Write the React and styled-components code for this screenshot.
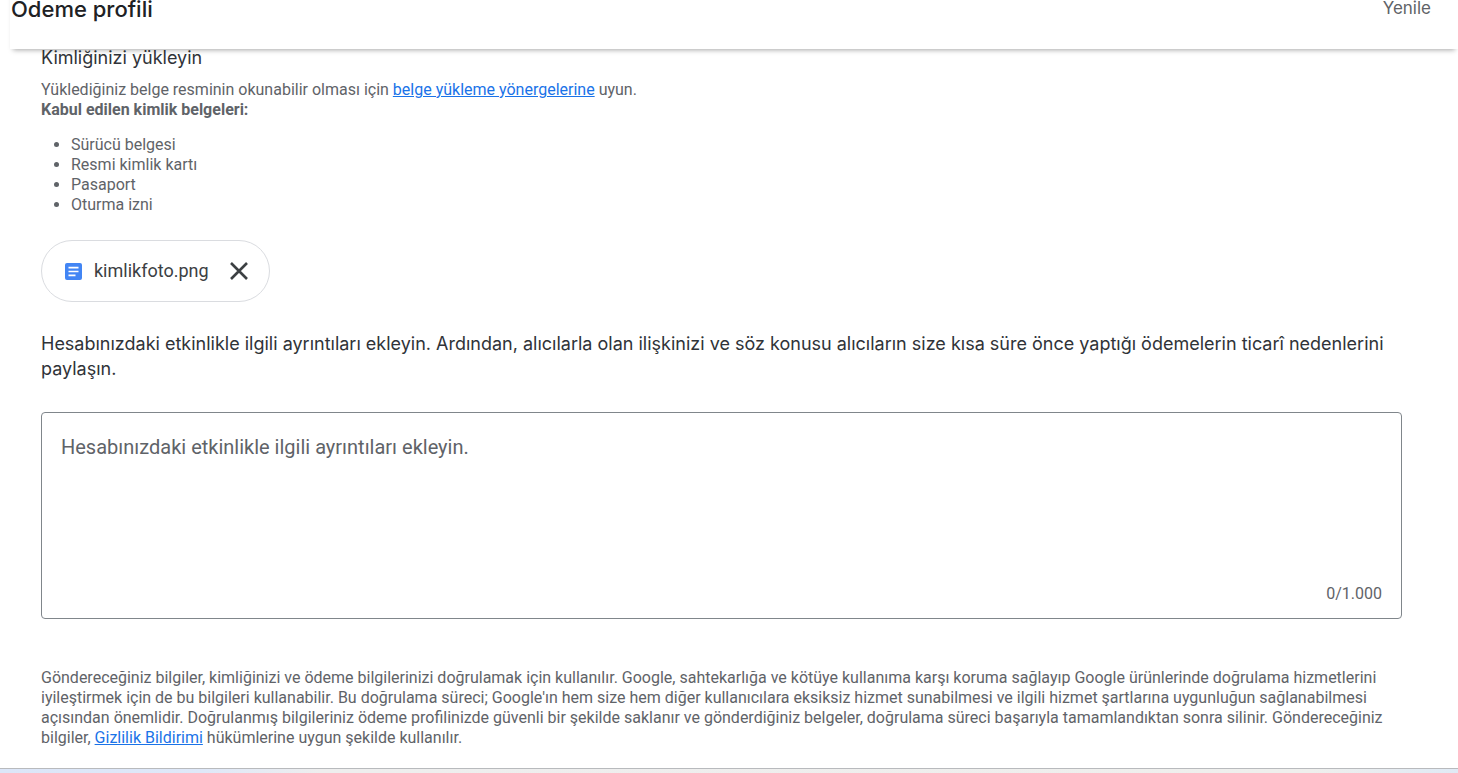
import React, { useState } from "react";
import styled, { createGlobalStyle } from "styled-components";

const GlobalStyle = createGlobalStyle`
  *, *::before, *::after { box-sizing: border-box; }
  body {
    margin: 0;
    background: #fff;
    color: #5f6368;
    font: 400 16px/20px Roboto, "Liberation Sans", sans-serif;
    overflow-x: hidden;
  }
`;

const Header = styled.header`
  position: relative;
  z-index: 1;
  display: flex;
  align-items: center;
  justify-content: space-between;
  height: 80px;
  margin: -31px 0 0 10px;
  padding: 0 27px 0 1px;
  background: #fff;
  box-shadow: 0 4px 5px -3px rgba(0, 0, 0, 0.35);
`;

const Title = styled.h1`
  margin: 0;
  color: #202124;
  font: 500 22px/28px Inter, Roboto, sans-serif;
`;

const RefreshButton = styled.button`
  padding: 0 0 2px;
  border: 0;
  background: none;
  color: #5f6368;
  font: 400 17px/24px Inter, Roboto, sans-serif;
  cursor: pointer;
`;

const Main = styled.main`
  margin-top: -4px;
  padding: 0 56px 20px 41px;
`;

const Heading = styled.h2`
  display: block;
  margin: 0;
  color: #303338;
  font: 400 18px/25px Inter, Roboto, sans-serif;
`;

const Section = styled.section`
  margin-bottom: 29px;
`;

const Copy = styled.p`
  margin: ${(p) => p.$top || 0}px 0 0;
`;

const Link = styled.a`
  color: #1a73e8;
  text-decoration: underline;
`;

const DocumentList = styled.ul`
  margin: 15px 0 25px;
  padding-left: 30px;
`;

const FileChip = styled.div`
  display: inline-flex;
  align-items: center;
  height: 62px;
  padding: 0 20px 0 23px;
  border: 1px solid #dadce0;
  border-radius: 31px;
  color: #3c4043;
  font-size: 18px;
  vertical-align: top;
`;

const FileName = styled.span`
  margin: 0 20px 0 12px;
`;

const RemoveButton = styled.button`
  display: flex;
  padding: 0;
  border: 0;
  background: none;
  color: #3c4043;
  cursor: pointer;
`;

const Field = styled.div`
  display: flex;
  flex-direction: column;
  height: 207px;
  margin: 31px 0 49px;
  padding: 19px;
  padding-bottom: 14px;
  border: 1px solid #80868b;
  border-radius: 4px;
`;

const TextArea = styled.textarea`
  flex: 1;
  padding: 0;
  border: 0;
  outline: 0;
  resize: none;
  background: none;
  color: #3c4043;
  font: 400 20px/30px Roboto, sans-serif;

  &::placeholder {
    color: #5f6368;
    opacity: 1;
  }
`;

const Counter = styled.output`
  align-self: flex-end;
`;

const BottomStrip = styled.footer`
  height: 5px;
  border-top: 1px solid #b8babd;
  background: linear-gradient(90deg, #dce6f8 0, #dfe8f8 14%, #eeeeee 22%, #efefed 90%, #e0eaf5 100%);
`;

function DocumentIcon() {
  return (
    <svg width="17" height="17" viewBox="0 0 17 17" aria-hidden="true">
      <rect width="17" height="17" rx="2" fill="#4285f4" />
      <path d="M3.5 4.7h10M3.5 8.5h10M3.5 12.3h7" stroke="#fff" strokeWidth="1.7" />
    </svg>
  );
}

function CloseIcon() {
  return (
    <svg width="20" height="20" viewBox="0 0 20 20" aria-hidden="true">
      <path d="M2 2l16 16M18 2L2 18" stroke="currentColor" strokeWidth="2.6" />
    </svg>
  );
}

const documents = ["Sürücü belgesi", "Resmi kimlik kartı", "Pasaport", "Oturma izni"];

export default function App() {
  const [details, setDetails] = useState("");
  const [file, setFile] = useState("kimlikfoto.png");

  return (
    <>
      <GlobalStyle />
      <Header>
        <Title>Ödeme profili</Title>
        <RefreshButton type="button">Yenile</RefreshButton>
      </Header>
      <Main>
        <Section>
          <Heading>Kimliğinizi yükleyin</Heading>
          <Copy $top={10}>
            Yüklediğiniz belge resminin okunabilir olması için{" "}
            <Link href="#yonergeler">belge yükleme yönergelerine</Link> uyun.
            <br />
            <strong>Kabul edilen kimlik belgeleri:</strong>
          </Copy>
          <DocumentList>
            {documents.map((name) => (
              <li key={name}>{name}</li>
            ))}
          </DocumentList>
          {file && (
            <FileChip>
              <DocumentIcon />
              <FileName>{file}</FileName>
              <RemoveButton type="button" aria-label="Dosyayı kaldır" onClick={() => setFile("")}>
                <CloseIcon />
              </RemoveButton>
            </FileChip>
          )}
        </Section>
        <Heading as="label" htmlFor="details">
          Hesabınızdaki etkinlikle ilgili ayrıntıları ekleyin. Ardından, alıcılarla olan ilişkinizi ve söz konusu
          alıcıların size kısa süre önce yaptığı ödemelerin ticarî nedenlerini paylaşın.
        </Heading>
        <Field>
          <TextArea
            id="details"
            maxLength={1000}
            placeholder="Hesabınızdaki etkinlikle ilgili ayrıntıları ekleyin."
            value={details}
            onChange={(e) => setDetails(e.target.value)}
          />
          <Counter htmlFor="details">{details.length}/1.000</Counter>
        </Field>
        <Copy>
          Göndereceğiniz bilgiler, kimliğinizi ve ödeme bilgilerinizi doğrulamak için kullanılır. Google, sahtekarlığa
          ve kötüye kullanıma karşı koruma sağlayıp Google ürünlerinde doğrulama hizmetlerini iyileştirmek için de bu
          bilgileri kullanabilir. Bu doğrulama süreci; Google'ın hem size hem diğer kullanıcılara eksiksiz hizmet
          sunabilmesi ve ilgili hizmet şartlarına uygunluğun sağlanabilmesi açısından önemlidir. Doğrulanmış
          bilgileriniz ödeme profilinizde güvenli bir şekilde saklanır ve gönderdiğiniz belgeler, doğrulama süreci
          başarıyla tamamlandıktan sonra silinir. Göndereceğiniz bilgiler, <Link href="#gizlilik">Gizlilik Bildirimi</Link>{" "}
          hükümlerine uygun şekilde kullanılır.
        </Copy>
      </Main>
      <BottomStrip />
    </>
  );
}
